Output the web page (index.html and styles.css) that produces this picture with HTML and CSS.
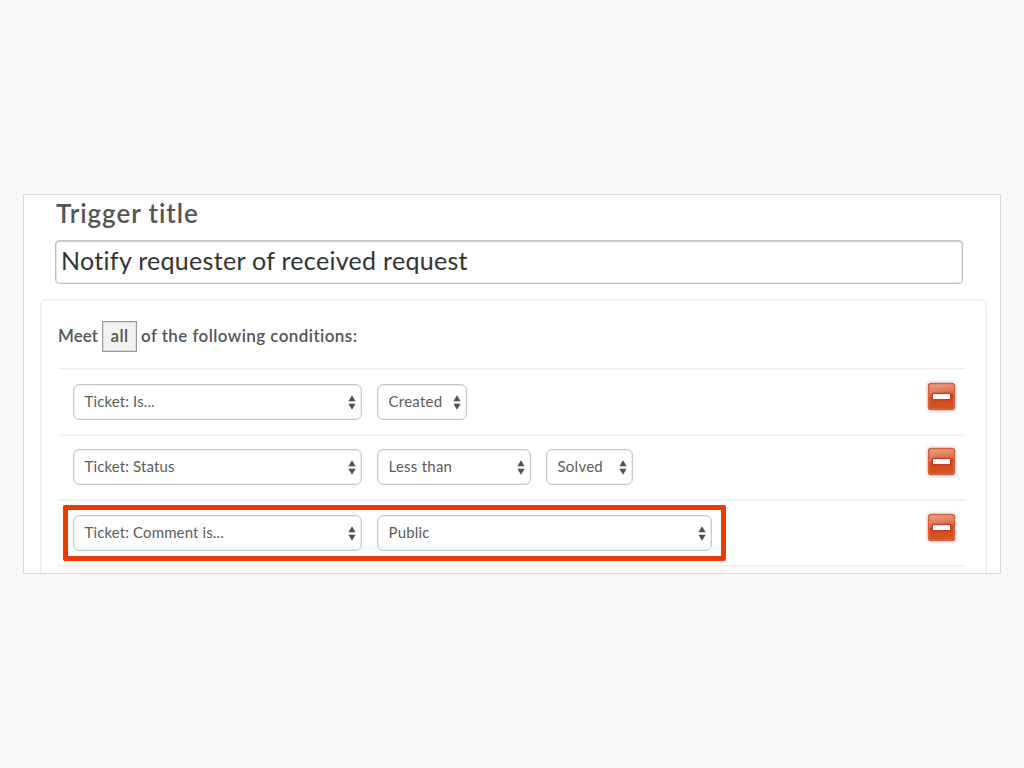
FILE: index.html
```html
<!DOCTYPE html>
<html lang="en">
<head>
<meta charset="utf-8">
<title>Trigger title</title>
<link rel="stylesheet" href="styles.css">
</head>
<body>
<svg class="defs" width="0" height="0" aria-hidden="true">
  <defs>
    <linearGradient id="red" x1="0" y1="0" x2="0.15" y2="1">
      <stop offset="0" stop-color="#eba48c"/>
      <stop offset="0.48" stop-color="#dc6b48"/>
      <stop offset="0.54" stop-color="#cc4a22"/>
      <stop offset="1" stop-color="#d4561f"/>
    </linearGradient>
    <symbol id="arrows" viewBox="0 0 8 15">
      <path d="M4 .3 7.6 6.3H.4ZM.4 8.7h7.2L4 14.7Z" fill="#505050"/>
    </symbol>
    <symbol id="minus" viewBox="0 0 33 33">
      <rect x=".5" y=".5" width="32" height="32" rx="4.5" fill="#edf0f1"/>
      <rect x="2.8" y="2.8" width="27.4" height="27.4" rx="3.5" fill="#cf5530"/>
      <rect x="4" y="4" width="25" height="25" rx="2.5" fill="url(#red)" stroke="#dc7552" stroke-width=".8"/>
      <rect x="6.7" y="12.8" width="19.6" height="7.6" rx="1.5" fill="#c43d24"/>
      <rect x="8" y="14.1" width="17" height="4.9" fill="#fff"/>
    </symbol>
  </defs>
</svg>
<main class="card">
  <h1 class="title">Trigger title</h1>
  <div class="title-input">Notify requester of received request</div>
  <section class="conditions">
    <div class="meet"><span class="word">Meet</span><span class="all">all</span><span class="rest">of the following conditions:</span></div>
    <div class="row">
      <div class="select field"><span>Ticket: Is...</span><svg class="arrows"><use href="#arrows"/></svg></div>
      <div class="select created"><span>Created</span><svg class="arrows"><use href="#arrows"/></svg></div>
      <svg class="minus"><use href="#minus"/></svg>
    </div>
    <div class="row tall">
      <div class="select field"><span>Ticket: Status</span><svg class="arrows"><use href="#arrows"/></svg></div>
      <div class="select less"><span>Less than</span><svg class="arrows"><use href="#arrows"/></svg></div>
      <div class="select solved"><span>Solved</span><svg class="arrows"><use href="#arrows"/></svg></div>
      <svg class="minus"><use href="#minus"/></svg>
    </div>
    <div class="row marked">
      <div class="select field"><span>Ticket: Comment is...</span><svg class="arrows"><use href="#arrows"/></svg></div>
      <div class="select public"><span>Public</span><svg class="arrows"><use href="#arrows"/></svg></div>
      <svg class="minus"><use href="#minus"/></svg>
    </div>
    <div class="row"></div>
  </section>
</main>
</body>
</html>
```
FILE: styles.css
```css
*, *::after { box-sizing: border-box; }
body {
  margin: 0;
  height: 768px;
  overflow: hidden;
  background: #f8f8f8;
  font-family: Lato, "Open Sans", sans-serif;
  font-variant-ligatures: none;
  color: #555;
}
.defs { position: absolute; }
.card {
  width: 978px;
  height: 380px;
  margin: 194px 0 0 23px;
  border: 1px solid #d9d9d9;
  background: #fff;
  overflow: hidden;
}
.title {
  margin: 0;
  height: 45px;
  padding: 1px 0 0 32px;
  font-size: 26px;
  line-height: 34px;
  font-weight: 600;
  letter-spacing: 0.93px;
}
.title-input {
  width: 908px;
  height: 44px;
  margin-left: 31px;
  padding-left: 5px;
  border: 1px solid #c2c2c2;
  border-radius: 4px;
  box-shadow: inset 0 1px 1px #ccc, inset 0 0 0 1px #e8e8e8;
  font-size: 25px;
  line-height: 39px;
  letter-spacing: 0.3px;
  color: #333;
  white-space: nowrap;
}
.conditions {
  width: 947px;
  height: 300px;
  margin: 15px 0 0 16px;
  padding: 0 20px 0 17px;
  border: 1px solid #ededed;
  border-radius: 6px;
  box-shadow: inset 0 0 0 1px #f8f8f8;
}
.meet {
  display: flex;
  align-items: center;
  height: 68px;
  padding-top: 4px;
  font-size: 17px;
  font-weight: 600;
}
.word { width: 40px; }
.rest { letter-spacing: 0.42px; }
.word, .rest { margin-top: -1px; }
.all {
  width: 35px;
  height: 31px;
  margin: 1px 4px 0;
  border: 1px solid #999;
  box-shadow: inset 0 0 0 1px #ddd;
  background: #f2f2f2;
  line-height: 28px;
  letter-spacing: 0.4px;
  text-align: center;
}
.row {
  position: relative;
  display: flex;
  gap: 15px;
  height: 66px;
  padding: 15px 10px 0 15px;
  border-top: 1px solid #f0f0f0;
  box-shadow: inset 0 1px #f3f3f3;
}
.row.tall { height: 65px; padding-top: 14px; }
.row.marked { padding-top: 15px; }
.marked::after {
  content: "";
  position: absolute;
  left: 5px;
  top: 5px;
  width: 663px;
  height: 56px;
  border: 5px solid #eb3b00;
  border-radius: 2px;
}
.select {
  display: flex;
  align-items: center;
  justify-content: space-between;
  height: 36px;
  padding: 0 5px 0 10.5px;
  border: 1px solid #c8c8c8;
  border-radius: 6px;
  box-shadow: inset 0 0 0 1px #eee;
  background: #fff;
  font-size: 15px;
  line-height: 32px;
  letter-spacing: 0.12px;
  color: #5c5c5c;
  white-space: nowrap;
}
.select span { margin-top: -3px; }
.field { width: 288.5px; margin-right: 0.5px; }
.created { width: 89.5px; letter-spacing: 0.25px; }
.less { width: 154px; letter-spacing: 0.25px; }
.solved { width: 87px; letter-spacing: 0.25px; }
.public { width: 334.5px; letter-spacing: 0.2px; }
.arrows { width: 8px; height: 15px; margin-top: 0; flex: none; }
.minus { width: 33px; height: 33px; margin: -4px -2px 0 auto; flex: none; }
```
